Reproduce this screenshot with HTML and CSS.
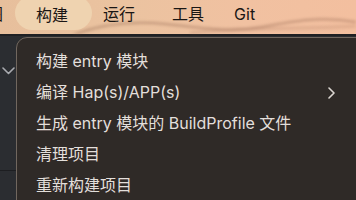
FILE: index.html
```html
<!DOCTYPE html>
<html>
<head>
<meta charset="utf-8">
<link rel="stylesheet" href="styles.css">
</head>
<body>
<div class="screen">
  <header class="menubar">
    <svg class="wave" width="356" height="34" viewBox="0 0 356 34">
      <path d="M70 36 C 95 26, 125 20, 165 24 S 230 33, 262 27 S 320 16, 356 22" fill="none" stroke="#7e4f3c" stroke-width="2" opacity="0.4"/>
      <path d="M190 33 C 240 27, 290 30, 356 26" fill="none" stroke="#9a6852" stroke-width="3" opacity="0.22"/>
    </svg>
    <span class="mi cut">视图</span>
    <span class="mi active">构建</span>
    <span class="mi">运行</span>
    <span class="mi">工具</span>
    <span class="mi">Git</span>
  </header>
  <div class="ide">
    <aside class="side">
      <svg class="chev" width="13" height="8" viewBox="0 0 13 8"><path d="M1 1 L6.5 6.5 L12 1" fill="none" stroke="#a9abb0" stroke-width="1.6" stroke-linecap="round" stroke-linejoin="round"/></svg>
      <div class="hline"></div>
    </aside>
  </div>
  <nav class="dropdown">
    <div class="row">构建 entry 模块</div>
    <div class="row sub">编译 Hap(s)/APP(s)
      <svg class="arrow" width="10" height="12" viewBox="0 0 10 12"><path d="M2 1 L7 6 L2 11" fill="none" stroke="#dcd7d2" stroke-width="1.6" stroke-linecap="round" stroke-linejoin="round"/></svg>
    </div>
    <div class="row">生成 entry 模块的 BuildProfile 文件</div>
    <div class="row">清理项目</div>
    <div class="row">重新构建项目</div>
  </nav>
</div>
</body>
</html>
```
FILE: styles.css
```css
html, body {
  margin: 0;
  padding: 0;
}
body {
  width: 356px;
  height: 200px;
  overflow: hidden;
  font-family: "Inter", "Noto Sans CJK SC", sans-serif;
  background: #2b2d30;
}
.screen {
  position: relative;
  width: 356px;
  height: 200px;
  overflow: hidden;
}
.menubar {
  position: relative;
  height: 34px;
  display: flex;
  align-items: flex-start;
  background: linear-gradient(90deg, #e7bf9c 0%, #ebc3a0 35%, #f1c1a1 70%, #f3bf9f 100%);
  border-bottom: 2px solid #1f2023;
}
.wave {
  position: absolute;
  left: 0;
  top: 0;
  filter: blur(1.5px);
}
.mi {
  position: relative;
  font-size: 16px;
  color: #1a1614;
  height: 28px;
  line-height: 28px;
  padding: 0 18px;
}
.mi.cut {
  margin-left: -47px;
  padding-right: 12px;
}
.mi.active {
  height: 34px;
  line-height: 30px;
  margin-top: -4px;
  padding: 4px 24px 0 21px;
  box-sizing: border-box;
  border-radius: 17px;
  background: #efd3b0;
}
.mi:nth-child(4) { padding-left: 11px; }
.mi:nth-child(5) { padding-left: 19px; }
.mi:nth-child(6) { padding-left: 12px; }
.ide {
  height: 164px;
  display: flex;
}
.side {
  width: 16px;
  background: #2b2d31;
  display: flex;
  flex-direction: column;
  align-items: flex-start;
}
.chev {
  margin-top: 31px;
  margin-left: 2px;
}
.hline {
  margin-top: 95px;
  width: 16px;
  height: 1px;
  background: #1d1e21;
}
.dropdown {
  position: absolute;
  left: 16px;
  top: 37px;
  width: 360px;
  height: 180px;
  box-sizing: border-box;
  border: 1px solid #71675f;
  border-radius: 11px;
  background: #2f2a27;
  padding: 8px 0 0 19px;
}
.row {
  position: relative;
  height: 31px;
  line-height: 31px;
  font-size: 16px;
  color: #e3dfdb;
  white-space: nowrap;
}
.arrow {
  position: absolute;
  left: 291px;
  top: 10px;
}
```
